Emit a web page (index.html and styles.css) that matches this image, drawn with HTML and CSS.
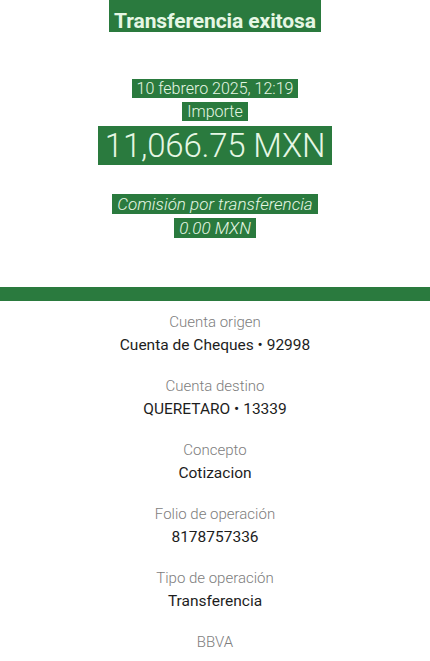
FILE: index.html
```html
<!DOCTYPE html>
<html lang="es">
<head>
  <meta charset="utf-8">
  <meta name="viewport" content="width=device-width, initial-scale=1">
  <link rel="stylesheet" href="styles.css">
</head>
<body>
  <!-- header: resultado de la transferencia -->
  <div class="header">
    <h1 class="title"><span class="hl">Transferencia exitosa</span></h1>
    <p class="date"><span class="hl">10 febrero 2025, 12:19</span></p>
    <p class="label"><span class="hl">Importe</span></p>
    <p class="amount"><span class="hl">11,066.75 MXN</span></p>
    <p class="fee"><span class="hl">Comisión por transferencia</span><br><span class="hl">0.00 MXN</span></p>
  </div>

  <div class="bar"></div>

  <!-- detalle -->
  <div class="details">
    <div class="item">
      <div class="k">Cuenta origen</div>
      <div class="v">Cuenta de Cheques • 92998</div>
    </div>
    <div class="item">
      <div class="k">Cuenta destino</div>
      <div class="v">QUERETARO • 13339</div>
    </div>
    <div class="item">
      <div class="k">Concepto</div>
      <div class="v">Cotizacion</div>
    </div>
    <div class="item">
      <div class="k">Folio de operación</div>
      <div class="v">8178757336</div>
    </div>
    <div class="item">
      <div class="k">Tipo de operación</div>
      <div class="v">Transferencia</div>
    </div>
    <div class="item last">
      <div class="k">BBVA</div>
    </div>
  </div>
</body>
</html>
```

FILE: styles.css
```css
html {font-family: Roboto, "Liberation Sans", sans-serif; text-align: center;}
body {margin: 0; background: #fff; color: #1d1d1d;}
p, h1 {margin: 0;}

.hl {background: #2a7a3e; color: #e6f7e4; padding: 0 5px; box-decoration-break: clone; -webkit-box-decoration-break: clone;}

.header {height: 287px;}
.title {font-size: 21px; font-weight: 700; line-height: 22px; letter-spacing: -0.1px;}
.title .hl {display: inline-block; padding: 10px 5px 0; line-height: 22px;}
.date {margin-top: 48px; font-size: 16px; font-weight: 300; line-height: 18px;}
.label {margin-top: 4px; font-size: 16px; font-weight: 300; line-height: 19px;}
.amount {margin-top: 6px; font-size: 33px; font-weight: 300; line-height: 38px; letter-spacing: -0.2px;}
.amount .hl {padding: 0 7px;}
.fee {margin-top: 27px; font-size: 17px; font-weight: 300; font-style: italic; line-height: 24px;}

.bar {height: 14px; background: #2a7a3e;}

.details {padding-top: 11px;}
.item {height: 64px;}
.item.last {height: auto;}
.k {font-size: 15px; font-weight: 300; color: #7d7d7d; line-height: 20px;}
.v {margin-top: 3px; font-size: 15.5px; font-weight: 400; color: #1d1d1d; line-height: 20px;}
```
